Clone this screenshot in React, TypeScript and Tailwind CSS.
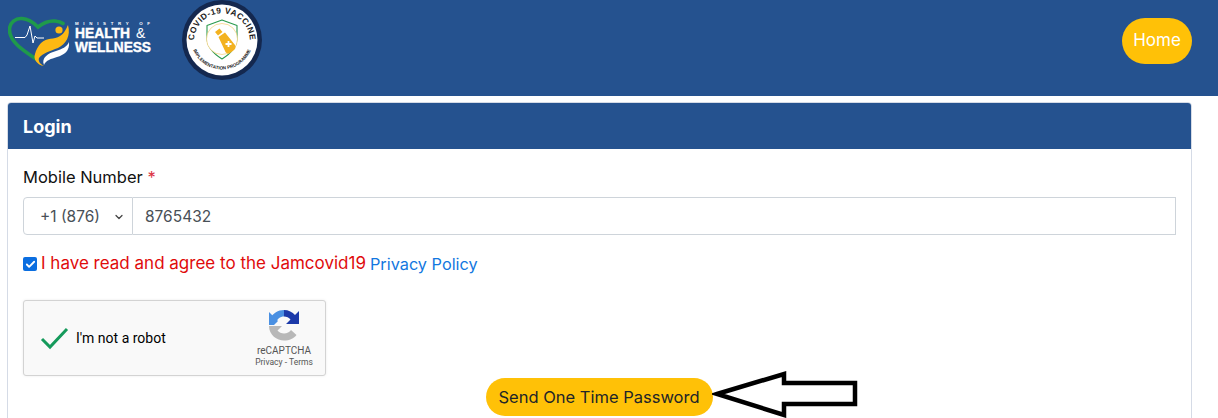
import { Check, ChevronDown } from "lucide-react";

// ─── Logos ───────────────────────────────────────────────────────────────────

function MinistryLogo() {
  return (
    <svg width="146" height="60" viewBox="0 0 146 60" fill="none">
      {/* heart */}
      <path d="M28 44 C16 36 1.5 27 1.5 15 C1.5 7 8 3 14 3.5 C21 4 26 8 30 12 C35 8 41 5.5 47 6 C50 6.2 53 7 55 8.5" stroke="#1f9a4b" strokeWidth="3.6" strokeLinecap="round" />
      {/* pulse */}
      <path d="M7 22.5 H17 L19 20 L22 11 L25 28 L27 21 L29 23 H36" stroke="#ffffff" strokeWidth="1" strokeLinejoin="round" />
      {/* figure */}
      <circle cx="51" cy="15" r="3.6" fill="#fdb913" />
      <path d="M33 28 C39 22 46 25 52 21 C56 19 58 14 60 10 C63 21 58 29 50 33 C42 36 35 38 31 43 C30 46 32 49 36 51 C29 50 25 44 27 39 C28 35 30 31 33 28 Z" fill="#fdb913" />
      <path d="M36 50 C33 43 40 38 48 36 C54 34 59 32 61 27 C62 36 56 40 49 42 C43 44 38 45 36 50 Z" fill="#ffffff" />
      {/* wordmark */}
      <text x="67" y="10.3" fill="#ffffff" fontSize="4.4" fontWeight="700" letterSpacing="4.7" fontFamily="'Liberation Sans', sans-serif">MINISTRY OF</text>
      <text x="67" y="22.7" fill="#ffffff" stroke="#ffffff" strokeWidth="0.4" fontSize="14.5" fontWeight="700" textLength="55" lengthAdjust="spacingAndGlyphs" fontFamily="'Liberation Sans', sans-serif">HEALTH</text>
      <text x="128" y="22.7" fill="#ffffff" fontSize="14" fontFamily="'Liberation Sans', sans-serif">&amp;</text>
      <text x="67" y="36.7" fill="#ffffff" stroke="#ffffff" strokeWidth="0.4" fontSize="14" fontWeight="700" textLength="76" lengthAdjust="spacingAndGlyphs" fontFamily="'Liberation Sans', sans-serif">WELLNESS</text>
    </svg>
  );
}

function VaccineBadge() {
  return (
    <svg width="82" height="82" viewBox="0 0 82 82" fill="none">
      <defs>
        <path id="badge-top" d="M13.4 46 A28 28 0 1 1 68.6 46" />
        <path id="badge-bottom" d="M10.5 44 A31 31 0 0 0 71.5 44" />
      </defs>
      <circle cx="41" cy="40" r="40" fill="#14284f" />
      <circle cx="41" cy="40" r="35.5" fill="#ffffff" />
      <text fill="#1a1a1a" fontSize="8.4" fontWeight="700" letterSpacing="0.5" fontFamily="'Liberation Sans', sans-serif">
        <textPath href="#badge-top" startOffset="50%" textAnchor="middle">COVID-19 VACCINE</textPath>
      </text>
      <text fill="#1a1a1a" fontSize="4.6" fontWeight="700" fontFamily="'Liberation Sans', sans-serif">
        <textPath href="#badge-bottom" startOffset="50%" textAnchor="middle">IMPLEMENTATION PROGRAMME</textPath>
      </text>
      {/* shield */}
      <path d="M41 20 L56 25.5 V38 C56 47 49 54 41 59 C33 54 26 47 26 38 V25.5 Z" stroke="#2a9a4d" strokeWidth="1.1" strokeLinejoin="round" />
      <circle cx="41" cy="39" r="15.5" stroke="#f3c65c" strokeWidth="0.6" fill="#ffffff" />
      {/* vial */}
      <path d="M34 32 L38.5 28.5 L41.5 32 L37 35.5 Z" fill="#f3b220" />
      <path d="M37.5 37 L44 32.5 L54 45 C55 47 54.5 49 53 50 L49 53 C47.5 54 45.5 53.5 44.5 52 Z" fill="#f3b220" />
      <path d="M47.5 41 V47 M44.5 44 H50.5" stroke="#ffffff" strokeWidth="1.8" />
    </svg>
  );
}

function RecaptchaLogo() {
  return (
    <svg width="32" height="32" viewBox="0 0 32 32" fill="none">
      <path d="M16 1 C10 1 5 4.5 2.5 9 L8 14 C9 10 12 7.5 16 7.5 Z" fill="#4a90e2" />
      <path d="M16 1 C20.5 1 24.5 3 27 6 L31 2 V15 H18 L22.5 10.5 C21 8.5 18.5 7.5 16 7.5 Z" fill="#1c3aa9" />
      <path d="M1 16 L1 3 L5 7 L10 12 L6 16 Z" fill="#4a90e2" />
      <path d="M1 17 H14 L9.5 21.5 C11 23.5 13.5 24.5 16 24.5 C19 24.5 21.5 23 23 21 L28.5 26 C26 29.5 21.5 31.5 16 31.5 C9 31.5 1 26 1 17 Z" fill="#b8b8b8" />
    </svg>
  );
}

// ─── Page ────────────────────────────────────────────────────────────────────

export default function App() {
  return (
    <div className="relative h-[418px] overflow-hidden bg-white font-['Inter','Noto_Sans',sans-serif] text-[15.5px] text-[#212529]">
      {/* Top bar */}
      <header className="flex h-24 justify-between bg-[#25528f] pr-[26px]">
        <div className="flex items-start">
          <div className="ml-[8px] mt-[15px]">
            <MinistryLogo />
          </div>
          <div className="ml-[27px] mt-0">
            <VaccineBadge />
          </div>
        </div>
        <button className="mt-[18px] h-[46px] w-[70px] rounded-[23px] bg-[#ffc107] text-[17px] text-white">
          Home
        </button>
      </header>

      {/* Login card: runs past the bottom of the window */}
      <div className="mx-[7px] mt-[6px] h-[360px] w-[1185px] rounded border border-[#d5dbe6]">
        <div className="flex h-[46px] items-center rounded-t-[3px] bg-[#25528f] px-[15px] text-[18px] font-bold text-white">
          Login
        </div>
        <div className="px-[15px] pt-[19px]">
          <label className="block h-[22px] text-[16.5px] leading-[18px] text-[#111]">
            Mobile Number <span className="text-[#dc3545]">*</span>
          </label>
          <div className="mt-[7px] flex h-[38px] w-[1153px] text-[#495057]">
            <div className="flex w-[110px] items-center justify-between rounded-l border border-[#ced4da] pl-[16px] pr-[7px] pt-px">
              <span>+1 (876)</span>
              <ChevronDown size={12} strokeWidth={2.5} className="text-[#444]" />
            </div>
            <div className="flex flex-1 items-center border border-l-0 border-[#ced4da] pl-[12px] pt-px">8765432</div>
          </div>
          <div className="mt-[19px] flex h-[20px] items-center">
            <span className="flex h-[14px] w-[14px] items-center justify-center rounded-[2px] bg-[#0b6ee0]">
              <Check size={11} strokeWidth={4} className="text-white" />
            </span>
            <span className="ml-[4px] text-[17px] text-[#e00b0b]">I have read and agree to the Jamcovid19</span>
            <span className="ml-[4px] text-[16.3px] text-[#1277e0]">Privacy Policy</span>
          </div>

          {/* reCAPTCHA box */}
          <div className="mt-[26px] flex h-[76px] w-[303px] items-center rounded-[3px] border border-[#d3d3d3] bg-[#f9f9f9] font-['Roboto',sans-serif] shadow-[0_0_3px_rgba(0,0,0,0.08)]">
            <svg width="30" height="24" viewBox="0 0 30 24" fill="none" className="ml-[16px]">
              <path d="M2 13 L10 21 L27 3" stroke="#159a5b" strokeWidth="3" />
            </svg>
            <span className="ml-[6px] text-sm text-black">I'm not a robot</span>
            <div className="ml-auto mr-[12px] flex w-[58px] flex-col items-center">
              <RecaptchaLogo />
              <span className="mt-[3px] text-[10px] leading-[13px] text-[#555]">reCAPTCHA</span>
              <span className="whitespace-nowrap text-[8.5px] leading-[11px] text-[#555]">Privacy - Terms</span>
            </div>
          </div>

          <div className="mt-[2px] flex justify-center">
            <button className="ml-[-1px] h-[38px] w-[227px] rounded-[19px] bg-[#ffc107] text-[16.5px] text-[#212529]">
              Send One Time Password
            </button>
          </div>
        </div>
      </div>

      {/* Annotation arrow */}
      <svg width="150" height="48" viewBox="0 0 150 48" fill="none" className="absolute left-[712px] top-[371px]">
        <path d="M5 23 L72 3 V12 H143 V33 H72 V44 Z" fill="#ffffff" stroke="#000000" strokeWidth="4.5" />
      </svg>
    </div>
  );
}
